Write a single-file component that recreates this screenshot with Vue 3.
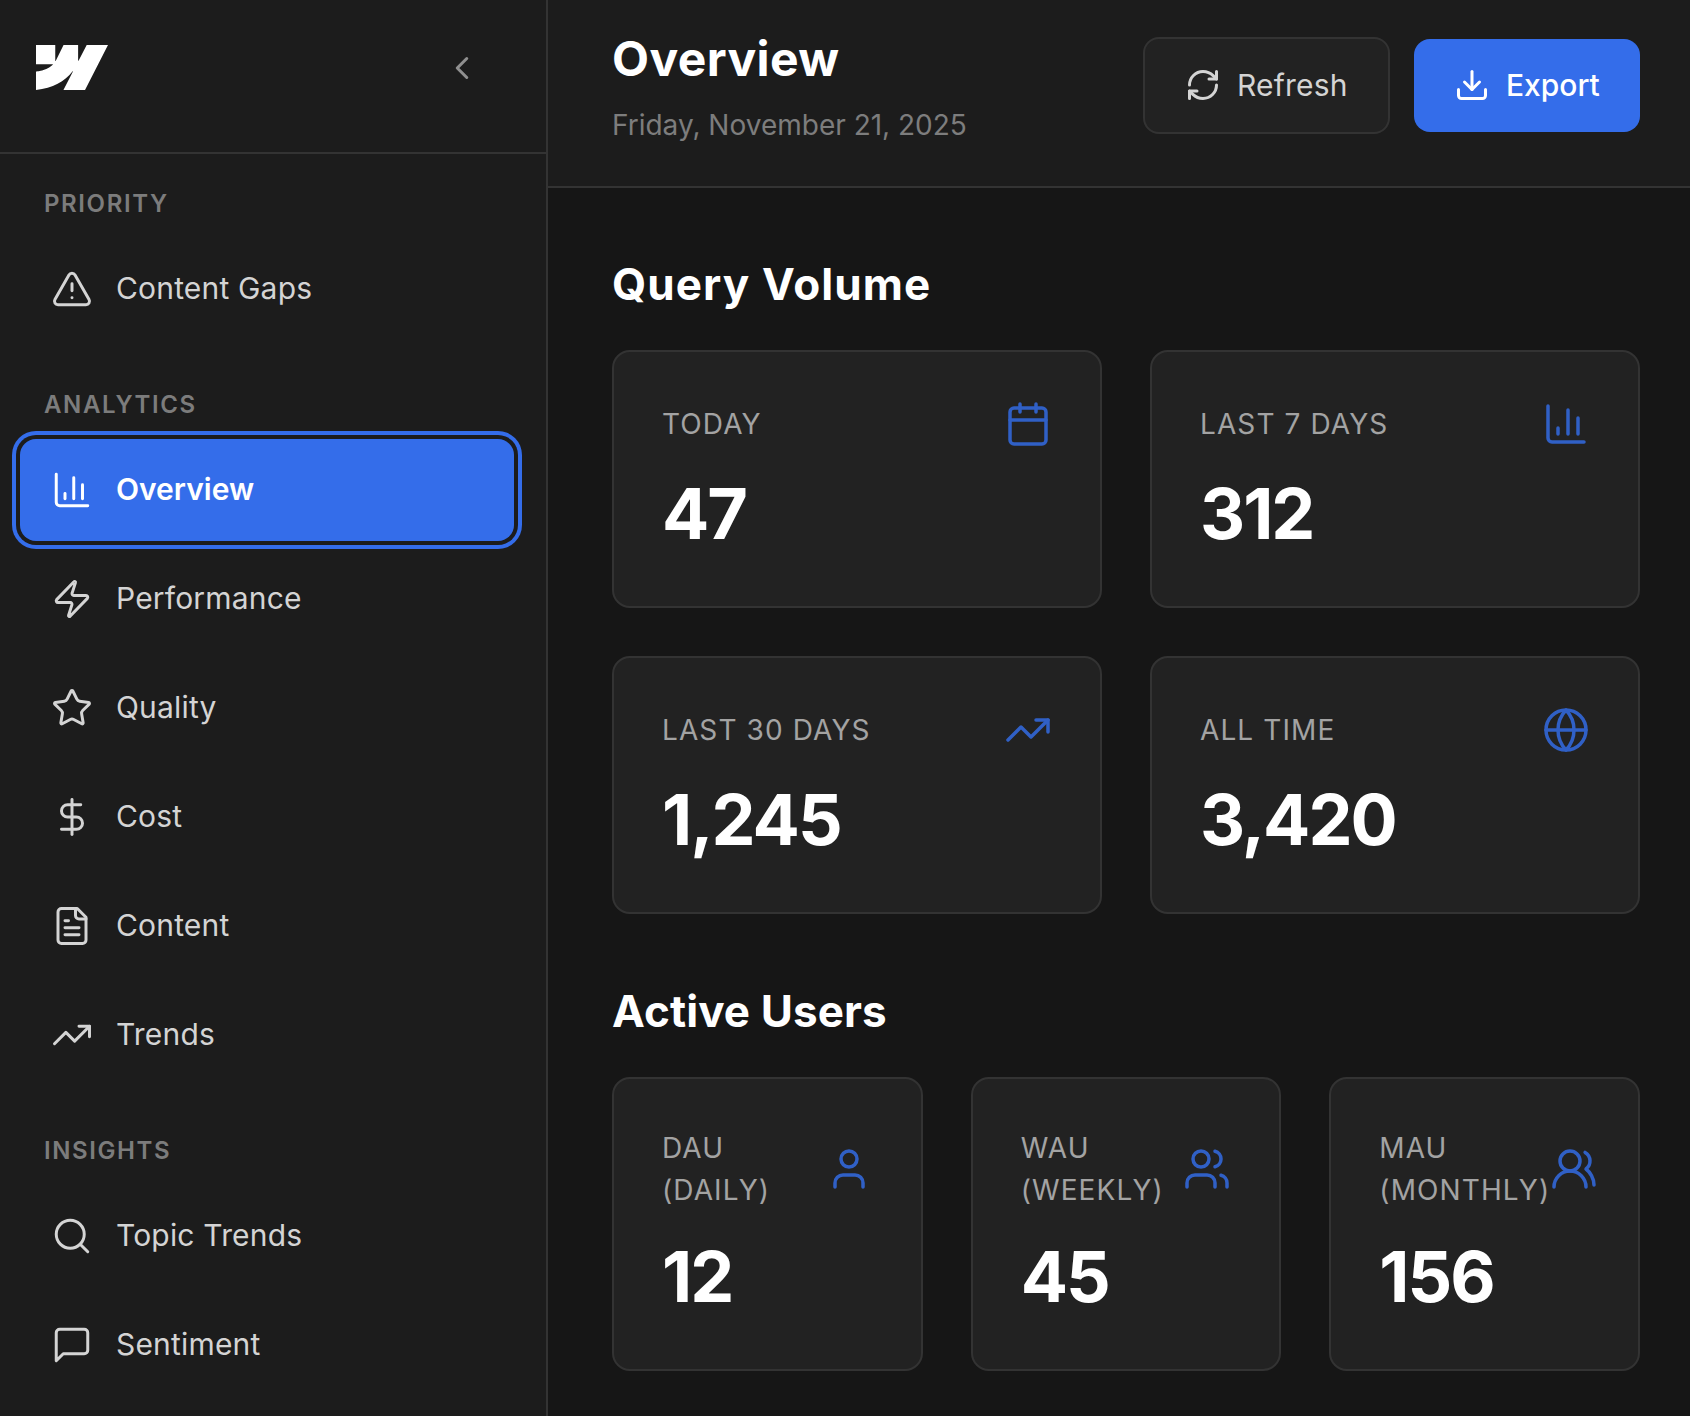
<script setup>
const ic = {
  alert: ['m21.73 18-8-14a2 2 0 0 0-3.48 0l-8 14A2 2 0 0 0 4 21h16a2 2 0 0 0 1.73-3', 'M12 9v4', 'M12 17h.01'],
  chart: ['M3 3v16a2 2 0 0 0 2 2h16', 'M18 17V9', 'M13 17V5', 'M8 17v-3'],
  zap: ['M4 14a1 1 0 0 1-.78-1.63l9.9-10.2a.5.5 0 0 1 .86.46l-1.92 6.02A1 1 0 0 0 13 10h7a1 1 0 0 1 .78 1.63l-9.9 10.2a.5.5 0 0 1-.86-.46l1.92-6.02A1 1 0 0 0 11 14z'],
  star: ['M11.525 2.295a.53.53 0 0 1 .95 0l2.31 4.679a2.123 2.123 0 0 0 1.595 1.16l5.166.756a.53.53 0 0 1 .294.904l-3.736 3.638a2.123 2.123 0 0 0-.611 1.878l.882 5.14a.53.53 0 0 1-.771.56l-4.618-2.428a2.122 2.122 0 0 0-1.973 0L6.396 21.01a.53.53 0 0 1-.77-.56l.881-5.139a2.122 2.122 0 0 0-.611-1.879L2.16 9.795a.53.53 0 0 1 .294-.906l5.165-.755a2.122 2.122 0 0 0 1.597-1.16z'],
  dollar: ['M12 2v20', 'M17 5H9.5a3.5 3.5 0 0 0 0 7h5a3.5 3.5 0 0 1 0 7H6'],
  file: ['M15 2H6a2 2 0 0 0-2 2v16a2 2 0 0 0 2 2h12a2 2 0 0 0 2-2V7Z', 'M14 2v4a2 2 0 0 0 2 2h4', 'M10 9H8', 'M16 13H8', 'M16 17H8'],
  trend: ['M22 7 13.5 15.5 8.5 10.5 2 17', 'M16 7h6v6'],
  search: ['M3 11a8 8 0 1 0 16 0a8 8 0 1 0-16 0', 'm21 21-4.3-4.3'],
  message: ['M21 15a2 2 0 0 1-2 2H7l-4 4V5a2 2 0 0 1 2-2h14a2 2 0 0 1 2 2z'],
  chevron: ['m15 18-6-6 6-6'],
  refresh: ['M3 12a9 9 0 0 1 9-9 9.75 9.75 0 0 1 6.74 2.74L21 8', 'M21 3v5h-5', 'M21 12a9 9 0 0 1-9 9 9.75 9.75 0 0 1-6.74-2.74L3 16', 'M8 16H3v5'],
  download: ['M21 15v4a2 2 0 0 1-2 2H5a2 2 0 0 1-2-2v-4', 'M7 10l5 5 5-5', 'M12 15V3'],
  calendar: ['M8 2v4', 'M16 2v4', 'M5 4h14a2 2 0 0 1 2 2v14a2 2 0 0 1-2 2H5a2 2 0 0 1-2-2V6a2 2 0 0 1 2-2z', 'M3 10h18'],
  globe: ['M2 12a10 10 0 1 0 20 0a10 10 0 1 0-20 0', 'M12 2a14.5 14.5 0 0 0 0 20 14.5 14.5 0 0 0 0-20', 'M2 12h20'],
  user: ['M19 21v-2a4 4 0 0 0-4-4H9a4 4 0 0 0-4 4v2', 'M8 7a4 4 0 1 0 8 0a4 4 0 1 0-8 0'],
  users: ['M16 21v-2a4 4 0 0 0-4-4H6a4 4 0 0 0-4 4v2', 'M5 7a4 4 0 1 0 8 0a4 4 0 1 0-8 0', 'M22 21v-2a4 4 0 0 0-3-3.87', 'M16 3.13a4 4 0 0 1 0 7.75'],
  usersRound: ['M18 21a8 8 0 0 0-16 0', 'M5 8a5 5 0 1 0 10 0a5 5 0 1 0-10 0', 'M22 20c0-3.37-2-6.5-4-8a5 5 0 0 0-.45-8.3'],
}
const nav = [
  { title: 'Priority', items: [{ label: 'Content Gaps', icon: 'alert' }] },
  {
    title: 'Analytics',
    items: [
      { label: 'Overview', icon: 'chart', active: true },
      { label: 'Performance', icon: 'zap' },
      { label: 'Quality', icon: 'star' },
      { label: 'Cost', icon: 'dollar' },
      { label: 'Content', icon: 'file' },
      { label: 'Trends', icon: 'trend' },
    ],
  },
  { title: 'Insights', items: [{ label: 'Topic Trends', icon: 'search' }, { label: 'Sentiment', icon: 'message' }] },
]
const volume = [
  { label: 'Today', value: '47', icon: 'calendar' },
  { label: 'Last 7 Days', value: '312', icon: 'chart' },
  { label: 'Last 30 Days', value: '1,245', icon: 'trend' },
  { label: 'All Time', value: '3,420', icon: 'globe' },
]
const users = [
  { label: 'DAU (Daily)', value: '12', icon: 'user' },
  { label: 'WAU (Weekly)', value: '45', icon: 'users' },
  { label: 'MAU (Monthly)', value: '156', icon: 'usersRound' },
]
</script>

<template>
  <div class="app">
    <aside class="sidebar">
      <div class="brand">
        <svg class="logo" viewBox="0 4.515 24 14.97"><path fill="#fff" d="m24 4.515-7.658 14.97H9.149l3.205-6.204h-.144C9.566 16.713 5.621 18.973 0 19.485v-6.118s3.596-.213 5.71-2.435H0V4.515h6.417v5.278l.144-.001 2.622-5.277h4.854v5.244h.144l2.72-5.244H24Z"/></svg>
        <svg class="chev" viewBox="0 0 24 24"><path v-for="d in ic.chevron" :key="d" :d="d"/></svg>
      </div>
      <nav class="nav">
        <section v-for="g in nav" :key="g.title" class="group">
          <h3 class="group-title">{{ g.title }}</h3>
          <div class="items">
            <a v-for="it in g.items" :key="it.label" class="item" :class="{ active: it.active }">
              <svg class="item-icon" viewBox="0 0 24 24"><path v-for="d in ic[it.icon]" :key="d" :d="d"/></svg>
              <span>{{ it.label }}</span>
            </a>
          </div>
        </section>
      </nav>
    </aside>
    <main class="main">
      <header class="top">
        <div class="heading">
          <h1>Overview</h1>
          <p>Friday, November 21, 2025</p>
        </div>
        <div class="actions">
          <button class="btn ghost">
            <svg viewBox="0 0 24 24"><path v-for="d in ic.refresh" :key="d" :d="d"/></svg>
            Refresh
          </button>
          <button class="btn primary">
            <svg viewBox="0 0 24 24"><path v-for="d in ic.download" :key="d" :d="d"/></svg>
            Export
          </button>
        </div>
      </header>
      <div class="content">
        <h2 class="first">Query Volume</h2>
        <div class="grid two">
          <div v-for="c in volume" :key="c.label" class="card">
            <div class="card-head">
              <span class="card-label">{{ c.label }}</span>
              <svg class="card-icon" viewBox="0 0 24 24"><path v-for="d in ic[c.icon]" :key="d" :d="d"/></svg>
            </div>
            <div class="card-value">{{ c.value }}</div>
          </div>
        </div>
        <h2 class="second">Active Users</h2>
        <div class="grid three">
          <div v-for="c in users" :key="c.label" class="card">
            <div class="card-head">
              <span class="card-label">{{ c.label }}</span>
              <svg class="card-icon" viewBox="0 0 24 24"><path v-for="d in ic[c.icon]" :key="d" :d="d"/></svg>
            </div>
            <div class="card-value">{{ c.value }}</div>
          </div>
        </div>
      </div>
    </main>
  </div>
</template>

<style>
html, body { margin: 0; background: #161616; }
</style>

<style scoped>
.app {
  display: flex;
  height: 1416px;
  overflow: hidden;
  font-family: Inter, "Liberation Sans", sans-serif;
  background: #161616;
}
svg { fill: none; stroke: currentColor; stroke-linecap: round; stroke-linejoin: round; stroke-width: 1.5; flex-shrink: 0; }
.sidebar {
  width: 546px;
  flex-shrink: 0;
  background: #1c1c1c;
  border-right: 2px solid #333;
}
.brand {
  height: 154px;
  border-bottom: 2px solid #333;
  display: flex;
  align-items: center;
  justify-content: space-between;
  padding: 0 65px 18px 36px;
  box-sizing: border-box;
}
.logo { width: 72px; height: 45px; stroke: none; }
.chev { width: 38px; height: 38px; margin-top: 2px; color: #8f8f8f; stroke-width: 1.9; }
.nav { padding-top: 31px; }
.group { margin-bottom: 46px; }
.group-title {
  margin: 0 0 17px;
  padding-left: 44px;
  height: 36px;
  line-height: 38px;
  font-size: 24px;
  font-weight: 600;
  letter-spacing: 1.6px;
  text-transform: uppercase;
  color: #7c7c7c;
}
.items { display: flex; flex-direction: column; gap: 7px; padding: 0 32px 0 20px; }
.item {
  height: 102px;
  display: flex;
  align-items: center;
  gap: 23px;
  padding-left: 31px;
  border-radius: 16px;
  font-size: 30px;
  letter-spacing: 0.18px;
  color: #d4d4d4;
}
.item span { padding-bottom: 2px; }
.item-icon { width: 42px; height: 42px; stroke-width: 1.7; }
.item.active {
  background: #346dea;
  color: #fff;
  font-weight: 600;
  letter-spacing: 0;
  box-shadow: 0 0 0 4px #1c1c1c, 0 0 0 8px #346dea;
}
.main { flex: 1; min-width: 0; }
.top {
  height: 188px;
  box-sizing: border-box;
  background: #1c1c1c;
  border-bottom: 2px solid #333;
  display: flex;
  justify-content: space-between;
  align-items: flex-start;
  padding: 29px 50px 0 64px;
}
h1 { margin: 0; font-size: 48px; line-height: 60px; font-weight: 700; letter-spacing: 0.4px; color: #fff; }
.heading p { margin: 16px 0 0; font-size: 28px; line-height: 40px; color: #7d7d7d; }
.actions { display: flex; align-items: center; gap: 24px; margin-top: 8px; }
.btn {
  display: flex;
  align-items: center;
  gap: 16px;
  border-radius: 16px;
  font: inherit;
  font-size: 30px;
  padding-bottom: 2px;
}
.btn svg { width: 36px; height: 36px; stroke-width: 2; }
.ghost { height: 97px; width: 247px; padding-left: 40px; padding-right: 0; padding-top: 0; background: #222; border: 2px solid #333; color: #d4d4d4; letter-spacing: 0.2px; }
.primary { height: 93px; width: 226px; padding-left: 40px; padding-right: 0; padding-top: 0; background: #346dea; border: 0; color: #fff; font-weight: 500; }
.content { padding: 64px 50px 0 64px; }
h2 { margin: 0 0 34px; font-size: 44px; line-height: 64px; font-weight: 700; color: #fff; }
h2.first { letter-spacing: 1.1px; }
h2.second { margin-top: 65px; letter-spacing: 0.1px; }
.grid { display: grid; gap: 48px; }
.two { grid-template-columns: repeat(2, minmax(0, 1fr)); }
.three { grid-template-columns: repeat(3, minmax(0, 1fr)); }
.card {
  box-sizing: border-box;
  background: #222;
  border: 2px solid #333;
  border-radius: 18px;
  padding: 48px;
  min-width: 0;
}
.two .card { height: 258px; }
.three .card { height: 294px; }
.card-head { display: flex; justify-content: space-between; align-items: center; gap: 0; }
.card-label {
  font-size: 28px;
  line-height: 42px;
  letter-spacing: 1.1px;
  text-transform: uppercase;
  color: #a3a3a3;
}
.card-icon { width: 48px; height: 48px; color: #3060c6; stroke-width: 1.75; }
.card-value { margin-top: 21px; font-size: 70px; line-height: 90px; font-weight: 700; letter-spacing: -2px; color: #fff; }
</style>
